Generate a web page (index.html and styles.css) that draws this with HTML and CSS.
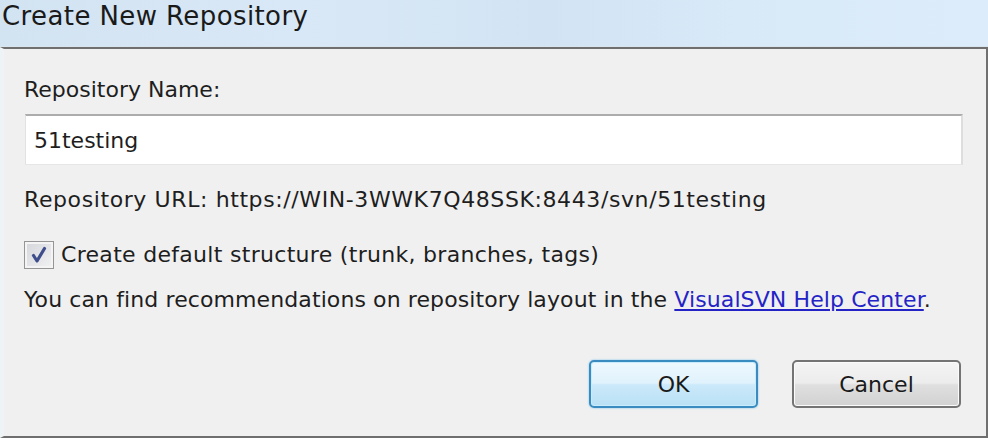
FILE: index.html
```html
<!DOCTYPE html>
<html>
<head>
<meta charset="utf-8">
<link rel="stylesheet" href="styles.css">
</head>
<body>
<div class="window">
  <div class="titlebar"><span class="title">Create New Repository</span></div>
  <div class="content">
    <div class="label">Repository Name:</div>
    <div class="input"><span>51testing</span></div>
    <div class="url">Repository URL: https://WIN-3WWK7Q48SSK:8443/svn/51testing</div>
    <div class="check-row">
      <span class="checkbox">
        <svg width="20" height="20" viewBox="0 0 20 20"><path d="M4.5 10.5 L8 16 L15.5 3.5" fill="none" stroke="#3e4e8c" stroke-width="3.2" stroke-linejoin="round" stroke-linecap="round"/></svg>
      </span>
      <span class="check-label">Create default structure (trunk, branches, tags)</span>
    </div>
    <div class="hint">You can find recommendations on repository layout in the <a class="link" href="#">VisualSVN Help Center</a>.</div>
    <div class="buttons">
      <div class="btn btn-ok">OK</div>
      <div class="btn btn-cancel">Cancel</div>
    </div>
  </div>
</div>
</body>
</html>
```
FILE: styles.css
```css
html, body {
  margin: 0;
  padding: 0;
  width: 988px;
  height: 438px;
  overflow: hidden;
  background: #f0f0f0;
}
.window {
  width: 988px;
  height: 438px;
  display: flex;
  flex-direction: column;
  font-family: "DejaVu Sans", "Liberation Sans", sans-serif;
  color: #1e1e1e;
}
.titlebar {
  height: 46px;
  flex: none;
  display: flex;
  align-items: flex-start;
  padding-left: 2px;
  background: linear-gradient(90deg, #d2e3f2 0%, #d9e8f6 30%, #d2e4f4 55%, #d8e9f8 75%, #dcecfa 100%);
  border-bottom: 1px solid #d8e4ee;
}
.title {
  font-size: 26px;
  line-height: 32px;
  color: #1a1a1a;
  letter-spacing: 0.4px;
}
.content {
  flex: 1;
  display: flex;
  flex-direction: column;
  background: #f0f0f0;
  border-top: 2px solid #6f6f6f;
  border-right: 2px solid #707070;
  border-bottom: 2px solid #6f6f6f;
  border-left: 4px solid #eef3f5;
  padding: 0 22px 0 20px;
  font-size: 22px;
}
.label {
  margin-top: 28px;
  line-height: 26px;
}
.input {
  margin-top: 11px;
  margin-left: 1px;
  width: 938px;
  height: 51px;
  box-sizing: border-box;
  background: #fff;
  border-top: 2px solid #acacac;
  border-left: 1px solid #e2e2e2;
  border-right: 2px solid #dedede;
  border-bottom: 1px solid #e6e6e6;
  display: flex;
  align-items: center;
  padding-left: 8px;
}
.url {
  margin-top: 22px;
  line-height: 26px;
  letter-spacing: 0.6px;
}
.check-row {
  margin-top: 28px;
  display: flex;
  align-items: center;
  height: 28px;
}
.checkbox {
  width: 30px;
  height: 28px;
  box-sizing: border-box;
  border: 1px solid #959595;
  background: linear-gradient(135deg, #d4d6db, #f2f2f4);
  display: flex;
  align-items: center;
  justify-content: center;
  box-shadow: inset 0 0 0 2px #f4f4f4;
}
.check-label {
  margin-left: 7px;
  line-height: 26px;
  letter-spacing: 0.3px;
}
.hint {
  margin-top: 18px;
  line-height: 26px;
  letter-spacing: 0.1px;
}
.link {
  color: #2424c6;
  text-decoration: underline;
}
.buttons {
  margin-top: 47px;
  display: flex;
  justify-content: flex-end;
  gap: 34px;
  padding-right: 3px;
}
.btn {
  width: 169px;
  height: 48px;
  box-sizing: border-box;
  border-radius: 5px;
  display: flex;
  align-items: center;
  justify-content: center;
  font-size: 22px;
  color: #1a1a1a;
}
.btn-ok {
  border: 2px solid #3a8cc0;
  background: linear-gradient(180deg, #eef8fe 0%, #e0f2fc 48%, #cbe9fa 52%, #b9e0f5 100%);
  box-shadow: 0 0 2px #68bbe8, inset 0 0 0 1px #c8ecfb;
}
.btn-cancel {
  border: 2px solid #747474;
  background: linear-gradient(180deg, #f4f4f4 0%, #ececec 48%, #dfdfdf 52%, #d2d2d2 100%);
  box-shadow: inset 0 0 0 1px #fbfbfb;
}
```
